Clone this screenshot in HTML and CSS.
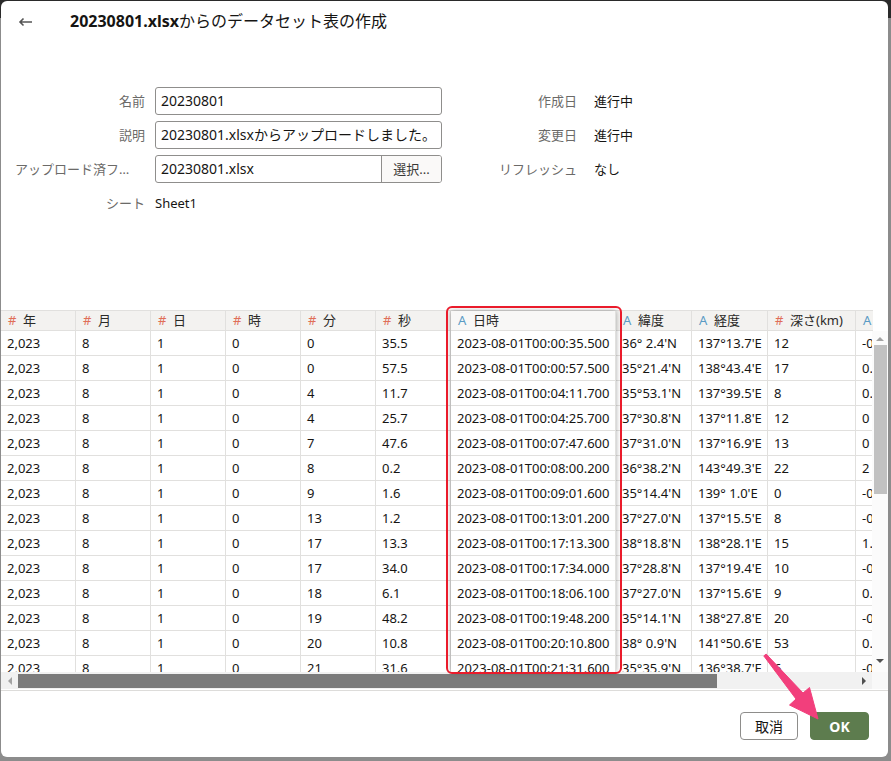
FILE: index.html
```html
<!DOCTYPE html>
<html lang="ja">
<head>
<meta charset="utf-8">
<title>データセット表の作成</title>
<link rel="stylesheet" href="styles.css">
</head>
<body>
<div class="dialog">
  <header class="dlg-header">
    <span class="back"><svg width="15" height="10" viewBox="0 0 15 10"><path d="M14 5H2M5.5 1.5L2 5l3.5 3.5" fill="none" stroke="#555" stroke-width="1.6"/></svg></span>
    <h1 class="title"><b>20230801.xlsx</b>からのデータセット表の作成</h1>
  </header>

  <section class="form">
    <div class="form-left">
      <div class="lbl">名前</div>
      <div class="input">20230801</div>
      <div class="lbl">説明</div>
      <div class="input">20230801.xlsxからアップロードしました。</div>
      <div class="lbl lbl-long">アップロード済ファイル</div>
      <div class="input file"><span class="fname">20230801.xlsx</span><span class="pick">選択...</span></div>
      <div class="lbl">シート</div>
      <div class="val">Sheet1</div>
    </div>
    <div class="form-right">
      <div class="lbl">作成日</div>
      <div class="val">進行中</div>
      <div class="lbl">変更日</div>
      <div class="val">進行中</div>
      <div class="lbl">リフレッシュ</div>
      <div class="val">なし</div>
    </div>
  </section>

  <section class="grid">
    <div class="thead row">
      <div class="cell"><span class="ic num">#</span>年</div>
      <div class="cell"><span class="ic num">#</span>月</div>
      <div class="cell"><span class="ic num">#</span>日</div>
      <div class="cell"><span class="ic num">#</span>時</div>
      <div class="cell"><span class="ic num">#</span>分</div>
      <div class="cell"><span class="ic num">#</span>秒</div>
      <div class="cell hl"><span class="ic txt">A</span>日時</div>
      <div class="cell"><span class="ic txt">A</span>緯度</div>
      <div class="cell"><span class="ic txt">A</span>経度</div>
      <div class="cell"><span class="ic num">#</span>深さ(km)</div>
      <div class="cell"><span class="ic txt">A</span>マグニチュード</div>
    </div>
    <div class="body-wrap">
      <div class="tbody">
        <div class="row"><div class="cell">2,023</div><div class="cell">8</div><div class="cell">1</div><div class="cell">0</div><div class="cell">0</div><div class="cell">35.5</div><div class="cell">2023-08-01T00:00:35.500</div><div class="cell">36° 2.4'N</div><div class="cell">137°13.7'E</div><div class="cell">12</div><div class="cell">-0.3</div></div>
        <div class="row"><div class="cell">2,023</div><div class="cell">8</div><div class="cell">1</div><div class="cell">0</div><div class="cell">0</div><div class="cell">57.5</div><div class="cell">2023-08-01T00:00:57.500</div><div class="cell">35°21.4'N</div><div class="cell">138°43.4'E</div><div class="cell">17</div><div class="cell">0.5</div></div>
        <div class="row"><div class="cell">2,023</div><div class="cell">8</div><div class="cell">1</div><div class="cell">0</div><div class="cell">4</div><div class="cell">11.7</div><div class="cell">2023-08-01T00:04:11.700</div><div class="cell">35°53.1'N</div><div class="cell">137°39.5'E</div><div class="cell">8</div><div class="cell">0.2</div></div>
        <div class="row"><div class="cell">2,023</div><div class="cell">8</div><div class="cell">1</div><div class="cell">0</div><div class="cell">4</div><div class="cell">25.7</div><div class="cell">2023-08-01T00:04:25.700</div><div class="cell">37°30.8'N</div><div class="cell">137°11.8'E</div><div class="cell">12</div><div class="cell">0</div></div>
        <div class="row"><div class="cell">2,023</div><div class="cell">8</div><div class="cell">1</div><div class="cell">0</div><div class="cell">7</div><div class="cell">47.6</div><div class="cell">2023-08-01T00:07:47.600</div><div class="cell">37°31.0'N</div><div class="cell">137°16.9'E</div><div class="cell">13</div><div class="cell">0</div></div>
        <div class="row"><div class="cell">2,023</div><div class="cell">8</div><div class="cell">1</div><div class="cell">0</div><div class="cell">8</div><div class="cell">0.2</div><div class="cell">2023-08-01T00:08:00.200</div><div class="cell">36°38.2'N</div><div class="cell">143°49.3'E</div><div class="cell">22</div><div class="cell">2</div></div>
        <div class="row"><div class="cell">2,023</div><div class="cell">8</div><div class="cell">1</div><div class="cell">0</div><div class="cell">9</div><div class="cell">1.6</div><div class="cell">2023-08-01T00:09:01.600</div><div class="cell">35°14.4'N</div><div class="cell">139° 1.0'E</div><div class="cell">0</div><div class="cell">-0.1</div></div>
        <div class="row"><div class="cell">2,023</div><div class="cell">8</div><div class="cell">1</div><div class="cell">0</div><div class="cell">13</div><div class="cell">1.2</div><div class="cell">2023-08-01T00:13:01.200</div><div class="cell">37°27.0'N</div><div class="cell">137°15.5'E</div><div class="cell">8</div><div class="cell">-0.4</div></div>
        <div class="row"><div class="cell">2,023</div><div class="cell">8</div><div class="cell">1</div><div class="cell">0</div><div class="cell">17</div><div class="cell">13.3</div><div class="cell">2023-08-01T00:17:13.300</div><div class="cell">38°18.8'N</div><div class="cell">138°28.1'E</div><div class="cell">15</div><div class="cell">1.1</div></div>
        <div class="row"><div class="cell">2,023</div><div class="cell">8</div><div class="cell">1</div><div class="cell">0</div><div class="cell">17</div><div class="cell">34.0</div><div class="cell">2023-08-01T00:17:34.000</div><div class="cell">37°28.8'N</div><div class="cell">137°19.4'E</div><div class="cell">10</div><div class="cell">-0.2</div></div>
        <div class="row"><div class="cell">2,023</div><div class="cell">8</div><div class="cell">1</div><div class="cell">0</div><div class="cell">18</div><div class="cell">6.1</div><div class="cell">2023-08-01T00:18:06.100</div><div class="cell">37°27.0'N</div><div class="cell">137°15.6'E</div><div class="cell">9</div><div class="cell">0.3</div></div>
        <div class="row"><div class="cell">2,023</div><div class="cell">8</div><div class="cell">1</div><div class="cell">0</div><div class="cell">19</div><div class="cell">48.2</div><div class="cell">2023-08-01T00:19:48.200</div><div class="cell">35°14.1'N</div><div class="cell">138°27.8'E</div><div class="cell">20</div><div class="cell">-0.5</div></div>
        <div class="row"><div class="cell">2,023</div><div class="cell">8</div><div class="cell">1</div><div class="cell">0</div><div class="cell">20</div><div class="cell">10.8</div><div class="cell">2023-08-01T00:20:10.800</div><div class="cell">38° 0.9'N</div><div class="cell">141°50.6'E</div><div class="cell">53</div><div class="cell">0.8</div></div>
        <div class="row"><div class="cell">2,023</div><div class="cell">8</div><div class="cell">1</div><div class="cell">0</div><div class="cell">21</div><div class="cell">31.6</div><div class="cell">2023-08-01T00:21:31.600</div><div class="cell">35°35.9'N</div><div class="cell">136°38.7'E</div><div class="cell">6</div><div class="cell">-0.6</div></div>
      </div>
      <div class="vscroll">
        <span class="arr up"></span>
        <span class="vthumb"></span>
        <span class="arr down"></span>
      </div>
    </div>
    <div class="hscroll">
      <span class="harea"><span class="arr left"></span></span>
      <span class="hthumb"></span>
      <span class="hgap"></span>
      <span class="harea"><span class="arr right"></span></span>
      <span class="corner"></span>
    </div>
    <div class="colshadow"></div>
    <div class="highlight"></div>
  </section>

  <footer class="dlg-footer">
    <button class="btn cancel">取消</button>
    <button class="btn ok">OK</button>
  </footer>
</div>
<svg class="pointer" width="891" height="761" viewBox="0 0 891 761">
  <polygon points="766.2,654.1 803,693 809.5,687.5 818,719 789.5,705 796,699 763.8,655.9" fill="#f23f7c" stroke="#f23f7c" stroke-width="1" stroke-linejoin="round"/>
</svg>
</body>
</html>
```

FILE: styles.css
```css
* { box-sizing: border-box; }

html, body {
  margin: 0;
  padding: 0;
}

body {
  width: 891px;
  height: 761px;
  overflow: hidden;
  background: linear-gradient(#2a2a2a 0, #2a2a2a 18px, #8c8c8c 18px);
  font-family: "Noto Sans", "Noto Sans CJK JP", sans-serif;
  color: #161513;
  position: relative;
}

.dialog {
  position: relative;
  margin: 1px 0 0 1px;
  width: 887px;
  height: 756px;
  background: #fff;
  border-radius: 6px;
  overflow: hidden;
  display: flex;
  flex-direction: column;
}

/* header */
.dlg-header {
  flex: none;
  height: 38px;
  display: flex;
  align-items: center;
  padding-left: 17px;
}

.back {
  display: flex;
  width: 15px;
  height: 10px;
  margin-top: 4px;
}

.title {
  margin: 0 0 0 37px;
  font-size: 16px;
  font-weight: 400;
  color: #161513;
}

.title b {
  font-weight: 700;
}

/* form */
.form {
  flex: none;
  height: 271px;
  padding: 48px 0 0 14px;
  display: flex;
  align-items: flex-start;
}

.form-left {
  display: grid;
  grid-template-columns: 130px 287px;
  grid-auto-rows: 28px;
  column-gap: 10px;
  row-gap: 6px;
}

.form-right {
  display: grid;
  grid-template-columns: 135px auto;
  grid-auto-rows: 28px;
  column-gap: 17px;
  row-gap: 6px;
}

.lbl {
  font-size: 13px;
  color: #6b6a68;
  text-align: right;
  line-height: 28px;
  white-space: nowrap;
  overflow: hidden;
  text-overflow: ellipsis;
}

.lbl-long {
  width: 119px;
  justify-self: start;
}

.val {
  font-size: 13px;
  line-height: 28px;
  color: #161513;
}

.input {
  border: 1px solid #8f8e8c;
  border-radius: 3px;
  font-size: 14px;
  line-height: 26px;
  padding-left: 5px;
  white-space: nowrap;
  overflow: hidden;
}

.input.file {
  display: flex;
  padding-left: 0;
}

.fname {
  flex: 1;
  padding-left: 5px;
}

.pick {
  width: 60px;
  border-left: 1px solid #8f8e8c;
  background: #faf9f8;
  text-align: center;
  font-size: 13px;
  color: #3a3937;
}

/* grid */
.grid {
  flex: none;
  position: relative;
  height: 380px;
  font-size: 13px;
}

.row {
  display: grid;
  grid-template-columns: 75px 75px 75px 75px 75px 75px 165px 76px 76px 88px 80px;
  width: 871px;
  overflow: hidden;
}

.cell {
  height: 25px;
  line-height: 24px;
  padding-left: 6px;
  border-right: 1px solid #e1e0de;
  border-bottom: 1px solid #e1e0de;
  white-space: nowrap;
  overflow: hidden;
  color: #161513;
}

.thead {
  border-top: 1px solid #e1e0de;
  background: #f3f2f0;
  width: 872px;
}

.thead .cell {
  height: 20px;
  line-height: 19px;
  padding-left: 7px;
  color: #2b2a28;
}

.thead .cell.hl {
  background: #f8f7f6;
}

.ic {
  display: inline-block;
  width: 15px;
}

.ic.num {
  color: #e06e58;
}

.ic.txt {
  color: #5a9bc4;
}

.body-wrap {
  display: flex;
  height: 341px;
}

.tbody {
  width: 871px;
  height: 341px;
  overflow: hidden;
}

.vscroll {
  width: 16px;
  height: 341px;
  background: #fbfbfb;
  display: flex;
  flex-direction: column;
  align-items: center;
}

.vthumb {
  width: 13px;
  height: 149px;
  background: #c1c1c1;
}

.arr {
  display: block;
  width: 0;
  height: 0;
  border-style: solid;
  border-color: transparent;
}

.arr.up {
  margin: 6px 0 4px;
  border-width: 0 4px 4px 4px;
  border-bottom-color: #a3a3a3;
}

.arr.down {
  margin: auto 0 9px;
  border-width: 4px 4px 0 4px;
  border-top-color: #505050;
}

.hscroll {
  display: flex;
  height: 17px;
  background: #f1f1f1;
  align-items: center;
}

.harea {
  width: 17px;
  height: 17px;
  display: flex;
  align-items: center;
  justify-content: center;
}

.arr.left {
  border-width: 4px 4px 4px 0;
  border-right-color: #a3a3a3;
}

.arr.right {
  border-width: 4px 0 4px 4px;
  border-left-color: #505050;
}

.hthumb {
  width: 699px;
  height: 14px;
  background: #7b7b7b;
}

.hgap {
  flex: 1;
  height: 17px;
}

.corner {
  width: 16px;
  height: 17px;
  background: #f8f8f8;
}

.colshadow {
  position: absolute;
  left: 450px;
  top: 1px;
  width: 165px;
  height: 361px;
  box-shadow: 0 0 5px rgba(0, 0, 0, 0.35);
  pointer-events: none;
}

.highlight {
  position: absolute;
  left: 445px;
  top: -4px;
  width: 176px;
  height: 368px;
  border: 2px solid #ea1b2b;
  border-radius: 6px;
  pointer-events: none;
}

/* footer */
.dlg-footer {
  flex: 1;
  border-top: 1px solid #dddcda;
  display: flex;
  justify-content: flex-end;
  align-items: flex-start;
  gap: 12px;
  padding: 21px 19px 0 0;
}

.btn {
  height: 28px;
  border-radius: 4px;
  font-family: "Noto Sans", "Noto Sans CJK JP", sans-serif;
  font-size: 14px;
  padding: 0;
  cursor: pointer;
}

.btn.cancel {
  width: 58px;
  background: #fff;
  border: 1px solid #8e8d8b;
  color: #161513;
}

.btn.ok {
  width: 59px;
  background: #5d7c4e;
  border: 1px solid #5d7c4e;
  color: #fff;
  font-weight: 700;
}

.pointer {
  position: absolute;
  left: 0;
  top: 0;
  pointer-events: none;
}
```
